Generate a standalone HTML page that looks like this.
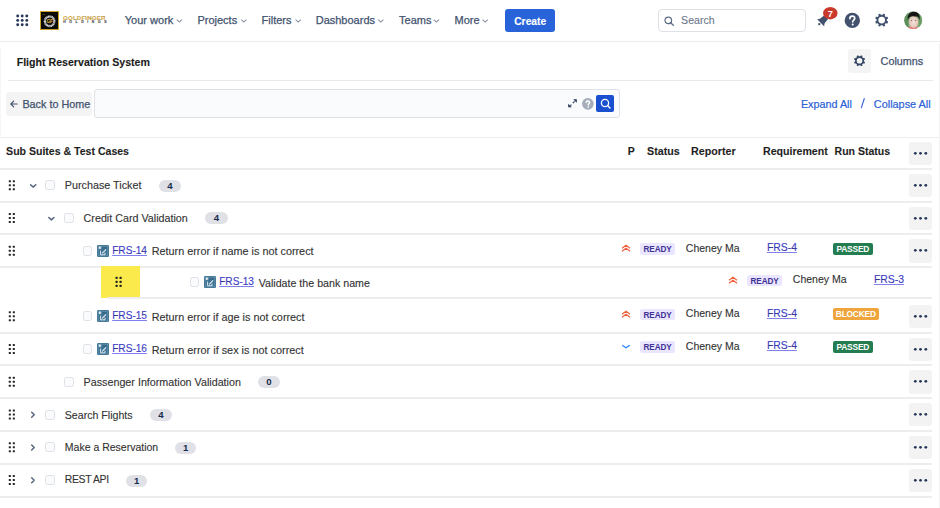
<!DOCTYPE html>
<html><head><meta charset="utf-8">
<style>
*{box-sizing:border-box;margin:0;padding:0}
html,body{width:940px;height:508px;overflow:hidden;background:#fff}
body{position:relative;font-family:"Liberation Sans",sans-serif;color:#333;-webkit-text-stroke:0.12px #333}
.a{position:absolute;white-space:nowrap;line-height:1}
.nav{color:#42526E;font-size:11px;-webkit-text-stroke:0.25px #42526E}
.hl{position:absolute;left:0;width:932px;height:2px;background:#EDEDED}
.dots{position:absolute;width:7px;height:11px}
.cb{position:absolute;width:10px;height:10px;border:1.4px solid #DFE1E6;border-radius:2.5px;background:#FAFBFC}
.bdg{position:absolute;height:12px;border-radius:6px;background:#DFE1E6;color:#172B4D;font-size:9.6px;font-weight:bold;text-align:center;line-height:12.5px;-webkit-text-stroke:0}
.more{position:absolute;left:909px;width:23px;height:23.4px;background:#F3F3F4;border-radius:3px}
.more i{position:absolute;top:10.6px;width:2.3px;height:2.3px;border-radius:50%;background:#253858}
.th{font-weight:bold;color:#1F1F1F}
.lnk{color:#3D3DE8;text-decoration:underline;text-decoration-color:#7F7FEE;text-underline-offset:1.2px}
.lz{position:absolute;height:11.5px;border-radius:2px;font-size:8.2px;font-weight:bold;line-height:11.5px;text-align:center;-webkit-text-stroke:0}
.ready{background:#EAE6FF;color:#403294}
</style></head><body>

<!-- top nav -->
<svg class="a" style="left:15px;top:14px" width="15" height="15" viewBox="0 0 15 15">
<g fill="#253858">
<circle cx="2.7" cy="2" r="1.45"/><circle cx="7.2" cy="2" r="1.45"/><circle cx="11.8" cy="2" r="1.45"/>
<circle cx="2.7" cy="6.4" r="1.45"/><circle cx="7.2" cy="6.4" r="1.45"/><circle cx="11.8" cy="6.4" r="1.45"/>
<circle cx="2.7" cy="10.8" r="1.45"/><circle cx="7.2" cy="10.8" r="1.45"/><circle cx="11.8" cy="10.8" r="1.45"/>
</g></svg>
<!-- logo -->
<div class="a" style="left:40px;top:10.6px;width:19.4px;height:19.4px;background:#0a0a0a;border:1px solid #C9A227"></div>
<svg class="a" style="left:40px;top:10.6px" width="20" height="20" viewBox="0 0 20 20">
<circle cx="9.6" cy="10.3" r="4.7" fill="none" stroke="#F2F2F2" stroke-width="2.3" stroke-dasharray="0.9 0.35"/>
<circle cx="9.6" cy="10.3" r="3.45" fill="#141414"/>
<text x="9.5" y="12.1" font-size="4.8" font-weight="bold" font-style="italic" fill="#E3B23C" text-anchor="middle" font-family="Liberation Sans" letter-spacing="-0.3">GF</text>
<text x="2.6" y="3.9" font-size="1.8" fill="#C9A227" font-family="Liberation Sans">GF</text>
</svg>
<div class="a" style="left:63px;top:14.8px;font-size:6.1px;font-weight:bold;color:#F2C14E;letter-spacing:0.2px">GOLDFINGER</div>
<div class="a" style="left:63.3px;top:21.4px;font-size:3.4px;color:#555;letter-spacing:3.6px;font-weight:bold">HOLDINGS</div>

<div class="a nav" style="left:124.8px;top:14.8px">Your work</div>
<div class="a nav" style="left:197.4px;top:14.8px">Projects</div>
<div class="a nav" style="left:261.6px;top:14.8px">Filters</div>
<div class="a nav" style="left:315.7px;top:14.8px">Dashboards</div>
<div class="a nav" style="left:399.1px;top:14.8px">Teams</div>
<div class="a nav" style="left:454.6px;top:14.8px">More</div>
<svg class="a" style="left:0;top:0" width="500" height="40">
<g fill="none" stroke="#8993A4" stroke-width="1.1">
<path d="M176.8 19.6l2.6 2.5 2.6-2.5"/>
<path d="M241.2 19.6l2.6 2.5 2.6-2.5"/>
<path d="M295.6 19.6l2.6 2.5 2.6-2.5"/>
<path d="M378.2 19.6l2.6 2.5 2.6-2.5"/>
<path d="M433.8 19.6l2.6 2.5 2.6-2.5"/>
<path d="M482.6 19.6l2.6 2.5 2.6-2.5"/>
</g></svg>
<div class="a" style="left:505px;top:8.5px;width:50.4px;height:23.3px;background:#2863DA;border-radius:3px"></div>
<div class="a" style="left:514.2px;top:16.5px;font-size:10.3px;font-weight:bold;color:#fff;-webkit-text-stroke:0.1px #fff">Create</div>

<!-- search -->
<div class="a" style="left:657.5px;top:8.7px;width:148.3px;height:23.3px;border:1.8px solid #DDE0E5;border-radius:4px;background:#fff"></div>
<svg class="a" style="left:664px;top:15.5px" width="11" height="11" viewBox="0 0 11 11"><circle cx="4.3" cy="4.4" r="3.3" fill="none" stroke="#5E6C84" stroke-width="1.2"/><path d="M6.7 6.8l2.6 2.5" stroke="#5E6C84" stroke-width="1.3" stroke-linecap="round"/></svg>
<div class="a" style="left:681.1px;top:14.7px;font-size:10.6px;color:#6B778C;-webkit-text-stroke:0.1px #6B778C">Search</div>

<svg class="a" style="left:800px;top:0" width="140" height="41" viewBox="800 0 140 41">
<g transform="translate(822.8 20.6) rotate(45)">
<path d="M-2.6 -4.8 Q0 -5.6 2.6 -4.8 L3.3 0.6 Q3.8 2 5.2 3.1 L-5.2 3.1 Q-3.8 2 -3.3 0.6 Z" fill="#42526E"/>
<circle cx="0" cy="5" r="1.15" fill="#42526E"/>
</g>
<ellipse cx="830.3" cy="13.2" rx="7.2" ry="6.2" fill="#C93A2D"/>
<text x="830.3" y="16.6" font-size="9.2" font-weight="bold" fill="#fff" text-anchor="middle" font-family="Liberation Sans">7</text>
<circle cx="852.3" cy="20.4" r="7.7" fill="#42526E"/>
<path d="M849.9 18.6c0-1.5 1-2.4 2.4-2.4s2.4.9 2.4 2.2c0 1.7-2 1.8-2 3.4" fill="none" stroke="#fff" stroke-width="1.7" stroke-linecap="round"/>
<circle cx="852.7" cy="24.5" r="1.05" fill="#fff"/>
<g transform="translate(881.7 20.1) scale(1.0)"><circle r="4.3" fill="none" stroke="#42526E" stroke-width="1.9"/><rect x="-1.15" y="-6.6" width="2.3" height="2.6" rx="0.6" fill="#42526E" transform="rotate(22.5)"/><rect x="-1.15" y="-6.6" width="2.3" height="2.6" rx="0.6" fill="#42526E" transform="rotate(67.5)"/><rect x="-1.15" y="-6.6" width="2.3" height="2.6" rx="0.6" fill="#42526E" transform="rotate(112.5)"/><rect x="-1.15" y="-6.6" width="2.3" height="2.6" rx="0.6" fill="#42526E" transform="rotate(157.5)"/><rect x="-1.15" y="-6.6" width="2.3" height="2.6" rx="0.6" fill="#42526E" transform="rotate(202.5)"/><rect x="-1.15" y="-6.6" width="2.3" height="2.6" rx="0.6" fill="#42526E" transform="rotate(247.5)"/><rect x="-1.15" y="-6.6" width="2.3" height="2.6" rx="0.6" fill="#42526E" transform="rotate(292.5)"/><rect x="-1.15" y="-6.6" width="2.3" height="2.6" rx="0.6" fill="#42526E" transform="rotate(337.5)"/></g>
<defs><clipPath id="av"><circle cx="913.2" cy="20.2" r="8.9"/></clipPath>
<radialGradient id="face" cx="0.5" cy="0.5" r="0.6"><stop offset="0" stop-color="#F2E2DA"/><stop offset="0.7" stop-color="#E6C9BC"/><stop offset="1" stop-color="#CFA594"/></radialGradient></defs>
<g clip-path="url(#av)">
<rect x="904" y="11" width="19" height="19" fill="#86B080"/>
<rect x="904" y="11" width="4.5" height="19" fill="#5F8F5A"/>
<rect x="919" y="14" width="4" height="16" fill="#6E9D68"/>
<path d="M906 30.5 q1.5-4.5 7.5-4.5 q5 0 6.5 4.5z" fill="#E8787A"/>
<ellipse cx="913.6" cy="22" rx="4.7" ry="6" fill="url(#face)"/>
<path d="M907.8 20.5 C907 14 910.3 11.8 913.8 11.8 C917.8 11.8 920.6 14.2 919.6 20.5 C919.2 18 918.3 16.2 916 16.4 C913.5 16.6 911.5 15.8 909.6 17.2 C908.6 18 908.2 19.2 907.8 20.5z" fill="#161616"/>
<ellipse cx="911.6" cy="20.8" rx="0.8" ry="0.45" fill="#5A4440"/>
<ellipse cx="915.6" cy="20.8" rx="0.8" ry="0.45" fill="#5A4440"/>
</g>
</svg>

<div class="hl" style="top:40.7px;width:940px;height:1.6px;background:linear-gradient(#F0F1F4,#E6E8EC)"></div>

<!-- title row -->
<div class="a" style="left:16.7px;top:56.6px;font-size:10.62px;font-weight:bold;color:#1A1A1A">Flight Reservation System</div>
<div class="a" style="left:848.1px;top:48.8px;width:23.4px;height:24.4px;background:#F4F4F5;border-radius:3px"></div>
<svg class="a" style="left:840px;top:45px" width="40" height="32" viewBox="840 45 40 32"><g transform="translate(859.55 60.75) scale(0.85)"><circle r="4.3" fill="none" stroke="#344563" stroke-width="1.9"/><rect x="-1.15" y="-6.6" width="2.3" height="2.6" rx="0.6" fill="#344563" transform="rotate(22.5)"/><rect x="-1.15" y="-6.6" width="2.3" height="2.6" rx="0.6" fill="#344563" transform="rotate(67.5)"/><rect x="-1.15" y="-6.6" width="2.3" height="2.6" rx="0.6" fill="#344563" transform="rotate(112.5)"/><rect x="-1.15" y="-6.6" width="2.3" height="2.6" rx="0.6" fill="#344563" transform="rotate(157.5)"/><rect x="-1.15" y="-6.6" width="2.3" height="2.6" rx="0.6" fill="#344563" transform="rotate(202.5)"/><rect x="-1.15" y="-6.6" width="2.3" height="2.6" rx="0.6" fill="#344563" transform="rotate(247.5)"/><rect x="-1.15" y="-6.6" width="2.3" height="2.6" rx="0.6" fill="#344563" transform="rotate(292.5)"/><rect x="-1.15" y="-6.6" width="2.3" height="2.6" rx="0.6" fill="#344563" transform="rotate(337.5)"/></g></svg>
<div class="a nav" style="left:880.6px;top:55.6px;font-size:10.8px">Columns</div>
<div class="hl" style="left:7.5px;top:79.5px;width:925px;height:1.7px;background:#E9E9E9"></div>

<!-- filter row -->
<div class="a" style="left:6px;top:92.4px;width:86px;height:23.5px;background:#F4F4F5;border-radius:3px"></div>
<svg class="a" style="left:9px;top:98.7px" width="10" height="10" viewBox="0 0 10 10"><path d="M8.2 5H1.8M4.7 2.1L1.8 5l2.9 2.9" fill="none" stroke="#42526E" stroke-width="1.1" stroke-linecap="round" stroke-linejoin="round"/></svg>
<div class="a nav" style="left:22.4px;top:99.4px;font-size:10.8px">Back to Home</div>
<div class="a" style="left:94px;top:89.2px;width:525.8px;height:28.6px;border:1.3px solid #DFE1E6;border-radius:3px;background:#FAFBFC"></div>
<svg class="a" style="left:560px;top:90px" width="20" height="20" viewBox="560 90 20 20"><path d="M573.2 99.2h3.6v3.6z" fill="#253858"/><path d="M571.8 107.3h-3.6v-3.6z" fill="#253858"/><path d="M574.6 101.4l-1.8 1.8M570.4 105.6l1-1" stroke="#253858" stroke-width="1.1"/></svg>
<svg class="a" style="left:581.5px;top:97.8px" width="12" height="12" viewBox="0 0 12 12"><circle cx="5.85" cy="5.85" r="5.85" fill="#A5ADBA"/><path d="M4.2 4.6c0-1.1.7-1.7 1.7-1.7s1.7.6 1.7 1.6c0 1.1-1.4 1.2-1.4 2.4" fill="none" stroke="#fff" stroke-width="1.45" stroke-linecap="round"/><circle cx="6.2" cy="9" r=".85" fill="#fff"/></svg>
<div class="a" style="left:596.4px;top:94.6px;width:18px;height:17.5px;background:#1A4FD0;border-radius:2px"></div>
<svg class="a" style="left:599.5px;top:97.5px" width="12" height="12" viewBox="0 0 12 12"><circle cx="5" cy="5" r="3.6" fill="none" stroke="#fff" stroke-width="1.3"/><path d="M7.6 7.6l2.8 2.8" stroke="#fff" stroke-width="1.4"/></svg>
<div class="a" style="left:800.9px;top:99.3px;font-size:10.8px;color:#2B5FD6;-webkit-text-stroke:0.2px #2B5FD6">Expand All</div>
<svg class="a" style="left:858px;top:96px" width="10" height="14"><path d="M6.3 2.5L3.4 11.6" stroke="#3A68DA" stroke-width="1.15" stroke-linecap="round"/></svg>
<div class="a" style="left:873.8px;top:99.3px;font-size:10.9px;color:#2B5FD6;-webkit-text-stroke:0.2px #2B5FD6">Collapse All</div>

<div class="hl" style="top:136.5px;width:940px;height:1.8px;background:#EDEDED"></div>

<!-- table header -->
<div class="a th" style="left:6.1px;top:146.1px;font-size:10.55px">Sub Suites &amp; Test Cases</div>
<div class="a th" style="left:627.8px;top:146.1px;font-size:10.5px">P</div>
<div class="a th" style="left:647px;top:146.1px;font-size:10.7px">Status</div>
<div class="a th" style="left:691.1px;top:146.1px;font-size:10.7px">Reporter</div>
<div class="a th" style="left:763px;top:146.1px;font-size:10.6px">Requirement</div>
<div class="a th" style="left:834.6px;top:146.1px;font-size:10.5px">Run Status</div>

<div class="hl" style="top:168.4px"></div>
<div class="a" style="left:938.6px;top:44px;width:1px;height:464px;background:#F2F2F2"></div>
<div class="a" style="left:0;top:48px;width:1px;height:88px;background:#F6F6F6"></div>
<div class="more" style="top:141.80px"><svg width="23" height="23" style="position:absolute;left:0;top:0"><g fill="#253858"><circle cx="6.3" cy="11.3" r="1.4"/><circle cx="11.5" cy="11.3" r="1.4"/><circle cx="16.8" cy="11.3" r="1.4"/></g></svg></div><div class="cb" style="left:45.30px;top:180.18px"></div><div class="a " style="left:64.80px;top:180.06px;font-size:10.77px;">Purchase Ticket</div><div class="bdg" style="left:158.80px;top:179.68px;width:22.10px">4</div><div class="hl" style="top:200.66px"></div><div class="more" style="top:173.78px"><svg width="23" height="23" style="position:absolute;left:0;top:0"><g fill="#253858"><circle cx="6.3" cy="11.3" r="1.4"/><circle cx="11.5" cy="11.3" r="1.4"/><circle cx="16.8" cy="11.3" r="1.4"/></g></svg></div><div class="cb" style="left:63.70px;top:212.94px"></div><div class="a " style="left:83.60px;top:212.85px;font-size:10.74px;">Credit Card Validation</div><div class="bdg" style="left:204.90px;top:212.44px;width:23.00px">4</div><div class="hl" style="top:233.42px"></div><div class="more" style="top:206.54px"><svg width="23" height="23" style="position:absolute;left:0;top:0"><g fill="#253858"><circle cx="6.3" cy="11.3" r="1.4"/><circle cx="11.5" cy="11.3" r="1.4"/><circle cx="16.8" cy="11.3" r="1.4"/></g></svg></div><div class="cb" style="left:82.60px;top:245.80px;width:9.8px;height:9.8px"></div><svg class="a" style="left:96.80px;top:244.80px" width="12" height="12" viewBox="0 0 12 12"><rect width="12" height="12" rx="1.2" fill="#3E7495"/><rect x="1.1" y="1.1" width="9.8" height="9.8" fill="none" stroke="#7FA3B9" stroke-width="0.5"/><path d="M2 1.8h1.6v1.9H2zM4 2v1.5" fill="#E6EEF3" stroke="#E6EEF3" stroke-width="0.5"/><path d="M5.3 2.9h4" stroke="#2C5A75" stroke-width="0.8"/><path d="M3.6 5.6v4.2h4.4V7.6" fill="none" stroke="#E6EEF3" stroke-width="0.95"/><path d="M4.9 8.6l.9-.2 3.6-3.6-.7-.7-3.6 3.6z" fill="#F2F6F8"/></svg><div class="a lnk" style="left:112.20px;top:245.95px;font-size:10.1px;">FRS-14</div><div class="a " style="left:151.70px;top:246.32px;font-size:10.84px;">Return error if name is not correct</div><svg class="a" style="left:621.30px;top:244.10px" width="10" height="8" viewBox="0 0 10 8"><path d="M1 4.2L5 1.2l4 3M1 7.2l4-3 4 3" fill="none" stroke="#F0603C" stroke-width="1.15"/></svg><div class="lz ready" style="left:640.40px;top:243.05px;height:11.5px;line-height:13.4px;width:34.4px;letter-spacing:-0.1px">READY</div><div class="a " style="left:685.80px;top:242.91px;font-size:10.5px;">Cheney Ma</div><div class="a lnk" style="left:766.90px;top:243.00px;font-size:10.4px;">FRS-4</div><div class="lz" style="left:832.80px;top:242.95px;width:40px;height:12px;background:#237D50;color:#fff;line-height:12.2px;font-size:8.4px;letter-spacing:-0.18px">PASSED</div><div class="more" style="top:239.30px"><svg width="23" height="23" style="position:absolute;left:0;top:0"><g fill="#253858"><circle cx="6.3" cy="11.3" r="1.4"/><circle cx="11.5" cy="11.3" r="1.4"/><circle cx="16.8" cy="11.3" r="1.4"/></g></svg></div><div class="hl" style="top:266.18px"></div><div class="cb" style="left:82.60px;top:311.32px;width:9.8px;height:9.8px"></div><svg class="a" style="left:96.80px;top:310.32px" width="12" height="12" viewBox="0 0 12 12"><rect width="12" height="12" rx="1.2" fill="#3E7495"/><rect x="1.1" y="1.1" width="9.8" height="9.8" fill="none" stroke="#7FA3B9" stroke-width="0.5"/><path d="M2 1.8h1.6v1.9H2zM4 2v1.5" fill="#E6EEF3" stroke="#E6EEF3" stroke-width="0.5"/><path d="M5.3 2.9h4" stroke="#2C5A75" stroke-width="0.8"/><path d="M3.6 5.6v4.2h4.4V7.6" fill="none" stroke="#E6EEF3" stroke-width="0.95"/><path d="M4.9 8.6l.9-.2 3.6-3.6-.7-.7-3.6 3.6z" fill="#F2F6F8"/></svg><div class="a lnk" style="left:112.20px;top:311.47px;font-size:10.1px;">FRS-15</div><div class="a " style="left:151.70px;top:311.85px;font-size:10.83px;">Return error if age is not correct</div><svg class="a" style="left:621.30px;top:309.62px" width="10" height="8" viewBox="0 0 10 8"><path d="M1 4.2L5 1.2l4 3M1 7.2l4-3 4 3" fill="none" stroke="#F0603C" stroke-width="1.15"/></svg><div class="lz ready" style="left:640.40px;top:308.57px;height:11.5px;line-height:13.4px;width:34.4px;letter-spacing:-0.1px">READY</div><div class="a " style="left:685.80px;top:308.43px;font-size:10.5px;">Cheney Ma</div><div class="a lnk" style="left:766.90px;top:308.52px;font-size:10.4px;">FRS-4</div><div class="lz" style="left:832.80px;top:308.47px;width:46px;height:12px;background:#EFA43C;color:#fff;line-height:12.2px;font-size:8.4px;letter-spacing:-0.2px">BLOCKED</div><div class="more" style="top:304.82px"><svg width="23" height="23" style="position:absolute;left:0;top:0"><g fill="#253858"><circle cx="6.3" cy="11.3" r="1.4"/><circle cx="11.5" cy="11.3" r="1.4"/><circle cx="16.8" cy="11.3" r="1.4"/></g></svg></div><div class="hl" style="top:331.70px"></div><div class="cb" style="left:82.60px;top:344.08px;width:9.8px;height:9.8px"></div><svg class="a" style="left:96.80px;top:343.08px" width="12" height="12" viewBox="0 0 12 12"><rect width="12" height="12" rx="1.2" fill="#3E7495"/><rect x="1.1" y="1.1" width="9.8" height="9.8" fill="none" stroke="#7FA3B9" stroke-width="0.5"/><path d="M2 1.8h1.6v1.9H2zM4 2v1.5" fill="#E6EEF3" stroke="#E6EEF3" stroke-width="0.5"/><path d="M5.3 2.9h4" stroke="#2C5A75" stroke-width="0.8"/><path d="M3.6 5.6v4.2h4.4V7.6" fill="none" stroke="#E6EEF3" stroke-width="0.95"/><path d="M4.9 8.6l.9-.2 3.6-3.6-.7-.7-3.6 3.6z" fill="#F2F6F8"/></svg><div class="a lnk" style="left:112.20px;top:344.23px;font-size:10.1px;">FRS-16</div><div class="a " style="left:151.70px;top:344.59px;font-size:10.86px;">Return error if sex is not correct</div><svg class="a" style="left:621.30px;top:343.58px" width="10" height="5" viewBox="0 0 10 5"><path d="M1.2 1.2l3.8 2.6 3.8-2.6" fill="none" stroke="#2684FF" stroke-width="1.2"/></svg><div class="lz ready" style="left:640.40px;top:341.33px;height:11.5px;line-height:13.4px;width:34.4px;letter-spacing:-0.1px">READY</div><div class="a " style="left:685.80px;top:341.19px;font-size:10.5px;">Cheney Ma</div><div class="a lnk" style="left:766.90px;top:341.28px;font-size:10.4px;">FRS-4</div><div class="lz" style="left:832.80px;top:341.23px;width:40px;height:12px;background:#237D50;color:#fff;line-height:12.2px;font-size:8.4px;letter-spacing:-0.18px">PASSED</div><div class="more" style="top:337.58px"><svg width="23" height="23" style="position:absolute;left:0;top:0"><g fill="#253858"><circle cx="6.3" cy="11.3" r="1.4"/><circle cx="11.5" cy="11.3" r="1.4"/><circle cx="16.8" cy="11.3" r="1.4"/></g></svg></div><div class="hl" style="top:364.46px"></div><div class="a" style="left:100.8px;top:266.1px;width:39.2px;height:31.8px;background:#FBEA4B"></div><div class="cb" style="left:189.60px;top:277.30px;width:9.8px;height:9.8px"></div><svg class="a" style="left:203.80px;top:276.30px" width="12" height="12" viewBox="0 0 12 12"><rect width="12" height="12" rx="1.2" fill="#3E7495"/><rect x="1.1" y="1.1" width="9.8" height="9.8" fill="none" stroke="#7FA3B9" stroke-width="0.5"/><path d="M2 1.8h1.6v1.9H2zM4 2v1.5" fill="#E6EEF3" stroke="#E6EEF3" stroke-width="0.5"/><path d="M5.3 2.9h4" stroke="#2C5A75" stroke-width="0.8"/><path d="M3.6 5.6v4.2h4.4V7.6" fill="none" stroke="#E6EEF3" stroke-width="0.95"/><path d="M4.9 8.6l.9-.2 3.6-3.6-.7-.7-3.6 3.6z" fill="#F2F6F8"/></svg><div class="a lnk" style="left:219.20px;top:277.45px;font-size:10.1px;">FRS-13</div><div class="a " style="left:258.70px;top:277.97px;font-size:10.67px;">Validate the bank name</div><svg class="a" style="left:728.30px;top:275.60px" width="10" height="8" viewBox="0 0 10 8"><path d="M1 4.2L5 1.2l4 3M1 7.2l4-3 4 3" fill="none" stroke="#F0603C" stroke-width="1.15"/></svg><div class="lz ready" style="left:747.40px;top:274.55px;height:11.5px;line-height:13.4px;width:34.4px;letter-spacing:-0.1px">READY</div><div class="a " style="left:792.80px;top:274.41px;font-size:10.5px;">Cheney Ma</div><div class="a lnk" style="left:873.90px;top:274.50px;font-size:10.4px;">FRS-3</div><div class="hl" style="left:107px;top:297.4px;width:825px"></div><div class="cb" style="left:63.70px;top:376.74px"></div><div class="a " style="left:83.60px;top:376.65px;font-size:10.74px;">Passenger Information Validation</div><div class="bdg" style="left:257.90px;top:376.24px;width:22.30px">0</div><div class="hl" style="top:397.22px"></div><div class="more" style="top:370.34px"><svg width="23" height="23" style="position:absolute;left:0;top:0"><g fill="#253858"><circle cx="6.3" cy="11.3" r="1.4"/><circle cx="11.5" cy="11.3" r="1.4"/><circle cx="16.8" cy="11.3" r="1.4"/></g></svg></div><div class="cb" style="left:45.30px;top:409.50px"></div><div class="a " style="left:64.80px;top:409.51px;font-size:10.62px;">Search Flights</div><div class="bdg" style="left:149.70px;top:409.00px;width:22.50px">4</div><div class="hl" style="top:429.98px"></div><div class="more" style="top:403.10px"><svg width="23" height="23" style="position:absolute;left:0;top:0"><g fill="#253858"><circle cx="6.3" cy="11.3" r="1.4"/><circle cx="11.5" cy="11.3" r="1.4"/><circle cx="16.8" cy="11.3" r="1.4"/></g></svg></div><div class="cb" style="left:45.30px;top:442.26px"></div><div class="a " style="left:64.80px;top:442.37px;font-size:10.5px;">Make a Reservation</div><div class="bdg" style="left:175.40px;top:441.76px;width:20.70px">1</div><div class="hl" style="top:462.74px"></div><div class="more" style="top:435.86px"><svg width="23" height="23" style="position:absolute;left:0;top:0"><g fill="#253858"><circle cx="6.3" cy="11.3" r="1.4"/><circle cx="11.5" cy="11.3" r="1.4"/><circle cx="16.8" cy="11.3" r="1.4"/></g></svg></div><div class="cb" style="left:45.30px;top:475.02px"></div><div class="a " style="left:64.80px;top:475.22px;font-size:10.4px;letter-spacing:-0.33px">REST API</div><div class="bdg" style="left:126.20px;top:474.52px;width:20.90px">1</div><div class="hl" style="top:495.50px"></div><div class="more" style="top:468.62px"><svg width="23" height="23" style="position:absolute;left:0;top:0"><g fill="#253858"><circle cx="6.3" cy="11.3" r="1.4"/><circle cx="11.5" cy="11.3" r="1.4"/><circle cx="16.8" cy="11.3" r="1.4"/></g></svg></div><svg class="a" style="left:0;top:0" width="940" height="508"><g fill="#262626"><rect x="8.78" y="180.13" width="2.1" height="2.1" rx="0.5"/><rect x="8.78" y="184.13" width="2.1" height="2.1" rx="0.5"/><rect x="8.78" y="188.13" width="2.1" height="2.1" rx="0.5"/><rect x="12.78" y="180.13" width="2.1" height="2.1" rx="0.5"/><rect x="12.78" y="184.13" width="2.1" height="2.1" rx="0.5"/><rect x="12.78" y="188.13" width="2.1" height="2.1" rx="0.5"/><rect x="8.78" y="212.89" width="2.1" height="2.1" rx="0.5"/><rect x="8.78" y="216.89" width="2.1" height="2.1" rx="0.5"/><rect x="8.78" y="220.89" width="2.1" height="2.1" rx="0.5"/><rect x="12.78" y="212.89" width="2.1" height="2.1" rx="0.5"/><rect x="12.78" y="216.89" width="2.1" height="2.1" rx="0.5"/><rect x="12.78" y="220.89" width="2.1" height="2.1" rx="0.5"/><rect x="8.78" y="245.65" width="2.1" height="2.1" rx="0.5"/><rect x="8.78" y="249.65" width="2.1" height="2.1" rx="0.5"/><rect x="8.78" y="253.65" width="2.1" height="2.1" rx="0.5"/><rect x="12.78" y="245.65" width="2.1" height="2.1" rx="0.5"/><rect x="12.78" y="249.65" width="2.1" height="2.1" rx="0.5"/><rect x="12.78" y="253.65" width="2.1" height="2.1" rx="0.5"/><rect x="8.78" y="311.17" width="2.1" height="2.1" rx="0.5"/><rect x="8.78" y="315.17" width="2.1" height="2.1" rx="0.5"/><rect x="8.78" y="319.17" width="2.1" height="2.1" rx="0.5"/><rect x="12.78" y="311.17" width="2.1" height="2.1" rx="0.5"/><rect x="12.78" y="315.17" width="2.1" height="2.1" rx="0.5"/><rect x="12.78" y="319.17" width="2.1" height="2.1" rx="0.5"/><rect x="8.78" y="343.93" width="2.1" height="2.1" rx="0.5"/><rect x="8.78" y="347.93" width="2.1" height="2.1" rx="0.5"/><rect x="8.78" y="351.93" width="2.1" height="2.1" rx="0.5"/><rect x="12.78" y="343.93" width="2.1" height="2.1" rx="0.5"/><rect x="12.78" y="347.93" width="2.1" height="2.1" rx="0.5"/><rect x="12.78" y="351.93" width="2.1" height="2.1" rx="0.5"/><rect x="115.55" y="276.85" width="2.1" height="2.1" rx="0.5"/><rect x="115.55" y="280.85" width="2.1" height="2.1" rx="0.5"/><rect x="115.55" y="284.85" width="2.1" height="2.1" rx="0.5"/><rect x="119.55" y="276.85" width="2.1" height="2.1" rx="0.5"/><rect x="119.55" y="280.85" width="2.1" height="2.1" rx="0.5"/><rect x="119.55" y="284.85" width="2.1" height="2.1" rx="0.5"/><rect x="8.78" y="376.69" width="2.1" height="2.1" rx="0.5"/><rect x="8.78" y="380.69" width="2.1" height="2.1" rx="0.5"/><rect x="8.78" y="384.69" width="2.1" height="2.1" rx="0.5"/><rect x="12.78" y="376.69" width="2.1" height="2.1" rx="0.5"/><rect x="12.78" y="380.69" width="2.1" height="2.1" rx="0.5"/><rect x="12.78" y="384.69" width="2.1" height="2.1" rx="0.5"/><rect x="8.78" y="409.45" width="2.1" height="2.1" rx="0.5"/><rect x="8.78" y="413.45" width="2.1" height="2.1" rx="0.5"/><rect x="8.78" y="417.45" width="2.1" height="2.1" rx="0.5"/><rect x="12.78" y="409.45" width="2.1" height="2.1" rx="0.5"/><rect x="12.78" y="413.45" width="2.1" height="2.1" rx="0.5"/><rect x="12.78" y="417.45" width="2.1" height="2.1" rx="0.5"/><rect x="8.78" y="442.21" width="2.1" height="2.1" rx="0.5"/><rect x="8.78" y="446.21" width="2.1" height="2.1" rx="0.5"/><rect x="8.78" y="450.21" width="2.1" height="2.1" rx="0.5"/><rect x="12.78" y="442.21" width="2.1" height="2.1" rx="0.5"/><rect x="12.78" y="446.21" width="2.1" height="2.1" rx="0.5"/><rect x="12.78" y="450.21" width="2.1" height="2.1" rx="0.5"/><rect x="8.78" y="474.97" width="2.1" height="2.1" rx="0.5"/><rect x="8.78" y="478.97" width="2.1" height="2.1" rx="0.5"/><rect x="8.78" y="482.97" width="2.1" height="2.1" rx="0.5"/><rect x="12.78" y="474.97" width="2.1" height="2.1" rx="0.5"/><rect x="12.78" y="478.97" width="2.1" height="2.1" rx="0.5"/><rect x="12.78" y="482.97" width="2.1" height="2.1" rx="0.5"/></g><g fill="none" stroke="#58667E" stroke-width="1.5" stroke-linecap="round" stroke-linejoin="round"><path d="M30.60 184.68l2.6 2.4 2.6-2.4"/><path d="M48.80 217.44l2.6 2.4 2.6-2.4"/><path d="M31.70 412.20l2.5 2.5-2.5 2.5"/><path d="M31.70 444.96l2.5 2.5-2.5 2.5"/><path d="M31.70 477.72l2.5 2.5-2.5 2.5"/></g></svg>
</body></html>
